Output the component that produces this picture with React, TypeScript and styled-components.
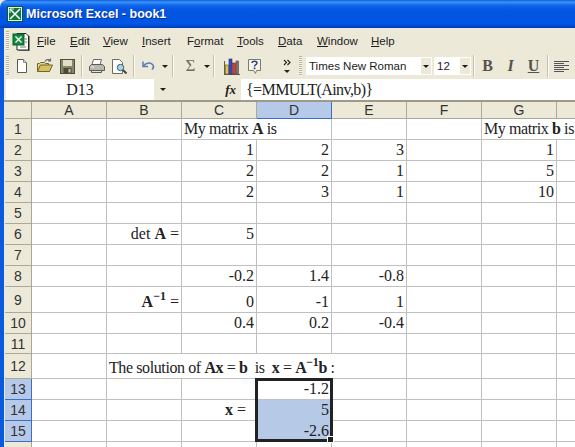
import { FC, ReactNode } from 'react';
import styled, { createGlobalStyle } from 'styled-components';

const GlobalStyle = createGlobalStyle`
    html, body {
        margin: 0;
        padding: 0;
        background: #ece9d8;
    }
`;

const Page = styled.div`
    width: 575px;
    height: 447px;
    overflow: hidden;
    display: flex;
    flex-direction: column;
    background: #ece9d8;
`;

const TitleBar = styled.div`
    height: 28px;
    flex: none;
    display: flex;
    align-items: center;
    gap: 3px;
    padding: 0 0 0 7px;
    border-radius: 7px 0 0 0;
    background: linear-gradient(to bottom, #0a5bd8 0, #3c95fb 2px, #1268ea 5px, #0457e2 9px, #0054e0 17px, #0058e8 23px, #0049cf 26px, #003bb0 28px);
`;

const TitleText = styled.span`
    font-family: "Liberation Sans", sans-serif;
    font-weight: 700;
    font-size: 12.5px;
    color: white;
    text-shadow: 1px 1px 0 #0a2f9c;
`;

const Frame = styled.div`
    flex: 1;
    min-height: 0;
    display: flex;
    flex-direction: column;
    border-left: 4px solid #0a5ae0;
`;

const MenuBar = styled.div`
    height: 26px;
    flex: none;
    display: flex;
    align-items: center;
    padding-left: 2px;
    background: #ece9d8;
`;

const Grip = styled.div<{ $h: number }>`
    width: 3px;
    height: ${p => p.$h}px;
    flex: none;
    background: repeating-linear-gradient(to bottom, #b5b29f 0 1px, #f7f6ef 1px 2px);
`;

const DocIcon = styled.div`
    width: 18px;
    height: 19px;
    flex: none;
    margin: 0 7px 0 3px;
`;

const MenuItem = styled.span<{ $w: number }>`
    width: ${p => p.$w}px;
    flex: none;
    font-family: "Liberation Sans", sans-serif;
    font-size: 11.5px;
    color: #1c1c1c;
`;

const ToolBar = styled.div`
    height: 24px;
    flex: none;
    display: flex;
    align-items: center;
    padding-left: 2px;
    background: #ece9d8;
`;

const ToolButton = styled.div<{ $w?: number }>`
    width: ${p => p.$w ?? 23}px;
    height: 22px;
    flex: none;
    display: flex;
    align-items: center;
    justify-content: center;
`;

const Separator = styled.div<{ $m?: number }>`
    width: 1px;
    height: 22px;
    flex: none;
    margin: 0 ${p => p.$m ?? 2}px 0 2px;
    background: #c4c1ae;
    border-right: 1px solid #fbfaf5;
`;

const SigmaGlyph = styled.span`
    font-family: "Liberation Serif", serif;
    font-size: 17px;
    color: #6c6c64;
`;

const DropArrow = styled.span`
    width: 0;
    height: 0;
    border-left: 3px solid transparent;
    border-right: 3px solid transparent;
    border-top: 3px solid #1c1c1c;
`;

const Combo = styled.div<{ $w: number }>`
    width: ${p => p.$w}px;
    height: 18px;
    flex: none;
    display: flex;
    align-items: center;
    justify-content: space-between;
    background: white;
    font-family: "Liberation Sans", sans-serif;
    font-size: 11.5px;
    color: #1c1c1c;
    padding-left: 3px;
    box-sizing: border-box;
`;

const ComboArrow = styled.div`
    width: 12px;
    height: 18px;
    display: flex;
    align-items: center;
    justify-content: center;
    background: #ece9d8;
    border: 1px solid white;
    box-sizing: border-box;
`;

const FormatLetter = styled.span<{ $italic?: boolean; $under?: boolean }>`
    font-family: "Liberation Serif", serif;
    font-weight: 700;
    font-size: 16px;
    color: #54544c;
    font-style: ${p => (p.$italic ? 'italic' : 'normal')};
    text-decoration: ${p => (p.$under ? 'underline' : 'none')};
`;

const FormulaBar = styled.div`
    height: 24px;
    flex: none;
    display: flex;
    align-items: stretch;
    padding: 1px 0 0 2px;
    box-sizing: border-box;
    border-bottom: 2px solid #9d9a8a;
    font-family: "Liberation Serif", serif;
    font-size: 16px;
    color: #1c1c1c;
`;

const NameBox = styled.div`
    width: 148px;
    flex: none;
    display: flex;
    align-items: center;
    justify-content: center;
    background: white;
`;

const NameArrow = styled.div`
    width: 18px;
    flex: none;
    display: flex;
    align-items: center;
    justify-content: center;
`;

const FxLabel = styled.div`
    width: 69px;
    flex: none;
    display: flex;
    align-items: center;
    justify-content: flex-end;
    padding-right: 5px;
    box-sizing: border-box;
    font-style: italic;
    font-weight: 700;
    font-size: 13px;
`;

const FormulaInput = styled.div`
    flex: 1;
    display: flex;
    align-items: center;
    padding-left: 5px;
    letter-spacing: -0.6px;
    background: white;
`;

const Sheet = styled.div`
    flex: none;
    position: relative;
    display: grid;
    margin-left: 1px;
    grid-template-columns: 27px repeat(8, 75px);
    background: white;
    font-family: "Liberation Serif", serif;
    font-size: 16px;
    color: #222;
`;

const HeaderCell = styled.div<{ $selected?: boolean }>`
    box-sizing: border-box;
    display: flex;
    align-items: center;
    justify-content: center;
    font-family: "Liberation Sans", sans-serif;
    font-size: 14px;
    color: #333;
    background: ${p => (p.$selected ? '#b6c9e8' : '#ece9d8')};
    border-right: 1px solid ${p => (p.$selected ? '#3a6fc4' : '#aca899')};
    border-bottom: 1px solid ${p => (p.$selected ? '#3a6fc4' : '#aca899')};
`;

const Cell = styled.div<{ $span?: number; $align?: string; $filled?: boolean }>`
    box-sizing: border-box;
    grid-column: span ${p => p.$span ?? 1};
    display: flex;
    align-items: flex-end;
    justify-content: ${p => p.$align ?? 'flex-end'};
    padding: 0 2px 1px 2px;
    line-height: 18px;
    white-space: pre;
    overflow: visible;
    background: ${p => (p.$filled ? '#b6c9e6' : 'white')};
    border-right: 1px solid #c0c0c0;
    border-bottom: 1px solid ${p => (p.$filled ? '#b6c9e6' : '#c0c0c0')};
`;

const CellText = styled.span<{ $tight?: boolean }>`
    letter-spacing: ${p => (p.$tight ? '-0.4px' : '0')};
`;

const Sup = styled.sup`
    font-size: 12px;
    line-height: 0;
    font-weight: 700;
    vertical-align: 7px;
`;

// thick frame round the selected range, drawn over the cells
const SelectionFrame = styled.div`
    position: absolute;
    left: 250px;
    top: 276px;
    width: 78px;
    height: 64px;
    box-sizing: border-box;
    border: 3px solid #222;
    pointer-events: none;
`;

const FillHandle = styled.div`
    position: absolute;
    right: -4px;
    bottom: -4px;
    width: 5px;
    height: 5px;
    background: #222;
    border: 1px solid white;
`;

const Inverse: FC = () => <b>A<Sup>−1</Sup></b>;

const columns = ['A', 'B', 'C', 'D', 'E', 'F', 'G', 'H'];
const rowHeights = [21, 21, 21, 21, 21, 21, 21, 21, 26, 21, 20, 25, 21, 21, 21, 21];

type CellDef = { content: ReactNode; span?: number; align?: string };

const cells: Record<string, CellDef> = {
    C1: { content: <>My matrix <b>A</b> is</>, span: 2, align: 'flex-start' },
    G1: { content: <>My matrix <b>b</b> is</>, span: 2, align: 'flex-start' },
    C2: { content: '1' }, D2: { content: '2' }, E2: { content: '3' }, G2: { content: '1' },
    C3: { content: '2' }, D3: { content: '2' }, E3: { content: '1' }, G3: { content: '5' },
    C4: { content: '2' }, D4: { content: '3' }, E4: { content: '1' }, G4: { content: '10' },
    B6: { content: <>det <b>A</b> =</> },
    C6: { content: '5' },
    C8: { content: '-0.2' }, D8: { content: '1.4' }, E8: { content: '-0.8' },
    B9: { content: <><Inverse /> =</> },
    C9: { content: '0' }, D9: { content: '-1' }, E9: { content: '1' },
    C10: { content: '0.4' }, D10: { content: '0.2' }, E10: { content: '-0.4' },
    B12: {
        content: <>The solution of <b>Ax</b> = <b>b</b>  is  <b>x</b> = <Inverse /><b>b</b> :</>,
        span: 4,
        align: 'flex-start',
    },
    D13: { content: '-1.2' },
    C14: { content: <><b>x</b> =  </> },
    D14: { content: '5' },
    D15: { content: '-2.6' },
};

const ExcelDoc: FC = () => (
    <svg width="18" height="19" viewBox="0 0 18 19">
        <path d="M5 1.5h9l2.5 2.5v14H5z" fill="white" stroke="#222" />
        <path d="M17 4v15H7" fill="none" stroke="#222" strokeWidth="1" />
        <rect x="1" y="2" width="11" height="11" fill="#0d8a3a" stroke="#0a5c28" />
        <path d="M3.5 4.5l6 6M9.5 4.5l-6 6" stroke="white" strokeWidth="1.4" />
        <path d="M8 15h6M13 7h2M13 10h2" stroke="#777" />
    </svg>
);

const TitleIcon: FC = () => (
    <svg width="16" height="16" viewBox="0 0 16 16">
        <rect x="0.5" y="0.5" width="15" height="15" fill="#e8f5ec" stroke="#0b5a2a" />
        <rect x="2" y="2" width="12" height="12" fill="#0d7a38" />
        <path d="M3 3l10 10M13 3L3 13" stroke="white" strokeWidth="1.6" />
        <path d="M3 3h4M3 3v4" stroke="#d8f0e0" />
    </svg>
);

const NewIcon: FC = () => (
    <svg width="16" height="16" viewBox="0 0 16 16">
        <path d="M3.5 1.5h6l3 3v10h-9z" fill="white" stroke="#5a5a50" />
        <path d="M9.5 1.5v3h3" fill="#e8e6da" stroke="#8a8a7c" />
    </svg>
);

const OpenIcon: FC = () => (
    <svg width="18" height="16" viewBox="0 0 18 16">
        <path d="M1.5 13.5v-8h2l1-1h4l1 1h3v2" fill="#e3d28a" stroke="#6f6530" />
        <path d="M1.5 13.5l3-6.5h12l-3 6.5z" fill="#d8c060" stroke="#6f6530" />
        <path d="M9 3.5c1-2 3.5-2.5 5.5-1M14.5 0.5v2.5H12" fill="none" stroke="#5c7078" strokeWidth="1.2" />
    </svg>
);

const SaveIcon: FC = () => (
    <svg width="15" height="15" viewBox="0 0 15 15">
        <rect x="0.5" y="0.5" width="14" height="14" fill="#86866a" stroke="#4e4e3a" />
        <rect x="3" y="1" width="9" height="6" fill="#e0dfc6" />
        <rect x="3.5" y="9" width="8" height="5.5" fill="#4a4a38" />
        <rect x="8.5" y="10" width="2" height="3.5" fill="#c9c8ae" />
    </svg>
);

const PrintIcon: FC = () => (
    <svg width="17" height="16" viewBox="0 0 17 16">
        <path d="M5.5 1.5h8l-1.5 5h-8z" fill="white" stroke="#6c6c64" />
        <path d="M1.5 8.5l2-2h11l2 2v4h-15z" fill="#b9b8ac" stroke="#5c5c54" />
        <path d="M3.5 12.5h10v2h-10z" fill="#e8e7dc" stroke="#5c5c54" />
        <path d="M3 9h3" stroke="#f4f4ee" />
    </svg>
);

const PreviewIcon: FC = () => (
    <svg width="17" height="17" viewBox="0 0 17 17">
        <path d="M1.5 1.5h7l3 3v11h-10z" fill="white" stroke="#6c6c64" />
        <circle cx="9.5" cy="9.5" r="3.2" fill="#a9d3e8" stroke="#3e5b68" />
        <path d="M12 12l3.5 3.5" stroke="#46463c" strokeWidth="2" />
    </svg>
);

const UndoIcon: FC = () => (
    <svg width="15" height="12" viewBox="0 0 15 12">
        <path d="M2 1.5v5h5" fill="none" stroke="#5b78b8" strokeWidth="1.5" />
        <path d="M2.5 6c2-3 6.5-4 9-1.5 1.5 1.5 1 3.5-.5 5" fill="none" stroke="#5b78b8" strokeWidth="1.6" />
    </svg>
);

const ChartIcon: FC = () => (
    <svg width="17" height="17" viewBox="0 0 17 17">
        <path d="M1 16.5h16M1.5 3v13" stroke="#5c5c50" />
        <rect x="2.5" y="7" width="3" height="9" fill="#e8c23c" stroke="#6a5a20" strokeWidth="0.6" />
        <rect x="6" y="1" width="3" height="15" fill="#2f4fc0" stroke="#22307a" strokeWidth="0.6" />
        <rect x="9.5" y="5" width="3" height="11" fill="#c93f3a" stroke="#7a2a26" strokeWidth="0.6" />
        <rect x="13" y="3" width="2.5" height="13" fill="#8a7468" stroke="#4e4238" strokeWidth="0.6" />
    </svg>
);

const HelpIcon: FC = () => (
    <svg width="15" height="17" viewBox="0 0 15 17">
        <path d="M1.5 1.5h12v11h-4l-1 3-2-3h-5z" fill="#f6f4e4" stroke="#7d7d6a" />
        <path d="M5 5c0-2.400 5-2.400 5 0 0 1.800-2.500 1.500-2.500 3.500" fill="none" stroke="#2b3fa0" strokeWidth="1.5" />
        <rect x="6.700" y="9.500" width="1.700" height="1.700" fill="#2b3fa0" />
    </svg>
);

const MoreIcon: FC = () => (
    <svg width="8" height="15" viewBox="0 0 8 15">
        <path d="M1 1l2.500 2.500L1 6M4.500 1L7 3.500 4.500 6" fill="none" stroke="#222" strokeWidth="1.1" />
        <path d="M1 11h6l-3 3z" fill="#222" />
    </svg>
);

const AlignIcon: FC = () => (
    <svg width="15" height="13" viewBox="0 0 15 13">
        <path d="M0 1.500h15M0 3.500h10M0 5.500h15M0 7.500h10M0 9.500h15M0 11.500h10" stroke="#555" />
    </svg>
);

const App: FC = () => (
    <Page>
        <GlobalStyle />
        <TitleBar>
            <TitleIcon />
            <TitleText>Microsoft Excel - book1</TitleText>
        </TitleBar>
        <Frame>
            <MenuBar>
                <Grip $h={20} />
                <DocIcon><ExcelDoc /></DocIcon>
                <MenuItem $w={33}><u>F</u>ile</MenuItem>
                <MenuItem $w={33}><u>E</u>dit</MenuItem>
                <MenuItem $w={39}><u>V</u>iew</MenuItem>
                <MenuItem $w={45}><u>I</u>nsert</MenuItem>
                <MenuItem $w={50}>F<u>o</u>rmat</MenuItem>
                <MenuItem $w={41}><u>T</u>ools</MenuItem>
                <MenuItem $w={39}><u>D</u>ata</MenuItem>
                <MenuItem $w={54}><u>W</u>indow</MenuItem>
                <MenuItem $w={40}><u>H</u>elp</MenuItem>
            </MenuBar>
            <ToolBar>
                <Grip $h={20} />
                <ToolButton $w={1} />
                <ToolButton><NewIcon /></ToolButton>
                <ToolButton><OpenIcon /></ToolButton>
                <ToolButton><SaveIcon /></ToolButton>
                <Separator />
                <ToolButton><PrintIcon /></ToolButton>
                <ToolButton><PreviewIcon /></ToolButton>
                <Separator />
                <ToolButton><UndoIcon /></ToolButton>
                <ToolButton $w={10}><DropArrow /></ToolButton>
                <Separator $m={5} />
                <ToolButton><SigmaGlyph>Σ</SigmaGlyph></ToolButton>
                <ToolButton $w={9}><DropArrow /></ToolButton>
                <Separator $m={5} />
                <ToolButton><ChartIcon /></ToolButton>
                <ToolButton><HelpIcon /></ToolButton>
                <ToolButton $w={13} />
                <ToolButton $w={16}><MoreIcon /></ToolButton>
                <ToolButton $w={4} />
                <Grip $h={20} />
                <ToolButton $w={4} />
                <Combo $w={126}>Times New Roman<ComboArrow><DropArrow /></ComboArrow></Combo>
                <ToolButton $w={2} />
                <Combo $w={37}>12<ComboArrow><DropArrow /></ComboArrow></Combo>
                <Separator $m={1} />
                <ToolButton $w={23}><FormatLetter>B</FormatLetter></ToolButton>
                <ToolButton $w={23}><FormatLetter $italic>I</FormatLetter></ToolButton>
                <ToolButton $w={23}><FormatLetter $under>U</FormatLetter></ToolButton>
                <Separator $m={1} />
                <ToolButton $w={23}><AlignIcon /></ToolButton>
            </ToolBar>
            <FormulaBar>
                <NameBox>D13</NameBox>
                <NameArrow><DropArrow /></NameArrow>
                <FxLabel>fx</FxLabel>
                <FormulaInput>{'{=MMULT(Ainv,b)}'}</FormulaInput>
            </FormulaBar>
            <Sheet style={{ gridTemplateRows: `17px ${rowHeights.map(h => `${h}px`).join(' ')}` }}>
                <HeaderCell />
                {columns.map(col => (
                    <HeaderCell key={col} $selected={col === 'D'}>{col}</HeaderCell>
                ))}
                {rowHeights.map((_, i) => {
                    const row = i + 1;
                    const output: ReactNode[] = [
                        <HeaderCell key={`h${row}`} $selected={row >= 13 && row <= 15}>{row}</HeaderCell>,
                    ];
                    let skip = 0;
                    columns.forEach(col => {
                        if (skip > 0) {
                            skip--;
                            return;
                        }
                        const id = `${col}${row}`;
                        const def = cells[id];
                        if (def?.span) skip = def.span - 1;
                        output.push(
                            <Cell
                                key={id}
                                $span={def?.span}
                                $align={def?.align}
                                $filled={id === 'D14' || id === 'D15'}
                            >
                                {def && <CellText $tight={!!def.span}>{def.content}</CellText>}
                            </Cell>
                        );
                    });
                    return output;
                })}
                <SelectionFrame><FillHandle /></SelectionFrame>
            </Sheet>
        </Frame>
    </Page>
);

export default App;
